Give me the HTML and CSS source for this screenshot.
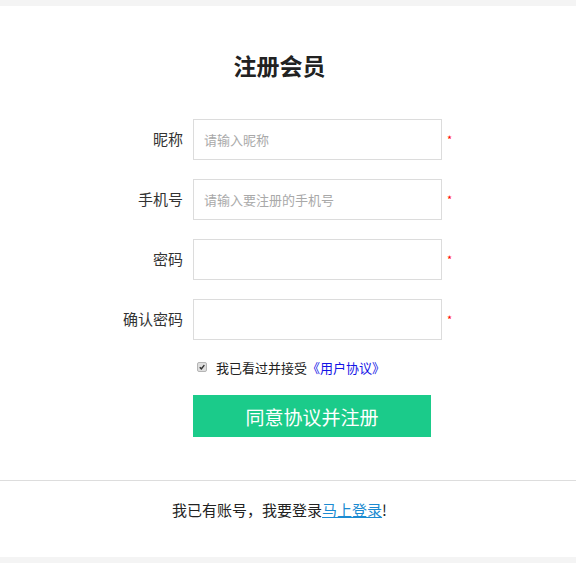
FILE: index.html
```html
<!DOCTYPE html>
<html lang="zh-CN">
<head>
<meta charset="utf-8">
<title>注册会员</title>
<link rel="stylesheet" href="styles.css">
</head>
<body>
<div class="page">
  <div class="inner">
    <h1 class="title">注册会员</h1>
    <form class="form">
      <div class="row">
        <label class="label">昵称</label>
        <input class="field" type="text" placeholder="请输入昵称">
        <span class="req">*</span>
      </div>
      <div class="row">
        <label class="label">手机号</label>
        <input class="field" type="text" placeholder="请输入要注册的手机号">
        <span class="req">*</span>
      </div>
      <div class="row">
        <label class="label">密码</label>
        <input class="field" type="password">
        <span class="req">*</span>
      </div>
      <div class="row row-last">
        <label class="label">确认密码</label>
        <input class="field" type="password">
        <span class="req">*</span>
      </div>
      <div class="agree">
        <span class="check"><svg width="10" height="10" viewBox="0 0 10 10"><path d="M2.2 5.2 L4.2 7.3 L7.9 2.6" fill="none" stroke="#333" stroke-width="1.8"/></svg></span>
        <span class="agree-text">我已看过并接受<a class="proto" href="#">《用户协议》</a></span>
      </div>
      <button class="submit" type="button">同意协议并注册</button>
    </form>
  </div>
  <div class="divider"></div>
  <div class="inner">
    <p class="login">我已有账号，我要登录<a class="login-link" href="#">马上登录</a>!</p>
  </div>
</div>
</body>
</html>
```
FILE: styles.css
```css
html, body {
  margin: 0;
  padding: 0;
}
body {
  background: #f4f4f4;
  padding: 6px 0;
  font-family: "Noto Sans CJK SC", "Noto Sans", sans-serif;
  color: #333;
}
.page {
  background: #fff;
  height: 551px;
  box-sizing: border-box;
  display: flex;
  flex-direction: column;
}
.inner {
  width: 559px;
}
.title {
  margin: 44px 0 0;
  height: 30px;
  line-height: 30px;
  font-size: 23px;
  font-weight: bold;
  text-align: center;
  color: #222;
}
.form {
  margin: 39px 0 0;
  display: flex;
  flex-direction: column;
}
.row {
  display: flex;
  align-items: center;
  height: 41px;
  margin-bottom: 19px;
}
.row-last {
  margin-bottom: 0;
}
.label {
  width: 183px;
  margin-right: 10px;
  text-align: right;
  font-size: 15px;
  color: #333;
  margin-top: -2px;
}
.field {
  width: 249px;
  height: 41px;
  box-sizing: border-box;
  border: 1px solid #dcdcdc;
  padding: 0 10px;
  font-size: 13px;
  font-family: "Noto Sans CJK SC", sans-serif;
  outline: none;
  margin: 0;
}
.field::placeholder {
  color: #a9a9a9;
}
.req {
  margin-left: 5px;
  color: #f00;
  font-size: 11px;
  line-height: 12px;
  margin-top: -2px;
}
.agree {
  display: flex;
  align-items: center;
  height: 20px;
  margin-top: 17px;
  padding-left: 197px;
}
.check {
  display: flex;
  width: 10px;
  height: 10px;
  box-sizing: border-box;
  border: 1px solid #b5b5b5;
  background: #dedede;
  border-radius: 2px;
  margin-right: 9px;
  align-items: center;
  justify-content: center;
}
.check svg {
  display: block;
}
.agree-text {
  font-size: 13px;
  color: #222;
}
.proto {
  color: #1414e6;
  text-decoration: none;
}
.submit {
  margin: 18px 0 0 193px;
  width: 238px;
  height: 42px;
  border: none;
  background: #1bcb8a;
  color: #fff;
  font-size: 19px;
  font-family: "Noto Sans CJK SC", sans-serif;
  padding: 0;
  cursor: pointer;
}
.divider {
  margin-top: 43px;
  height: 1px;
  background: #dddddd;
}
.login {
  margin: 19px 0 0;
  height: 20px;
  line-height: 20px;
  text-align: center;
  font-size: 15px;
  color: #222;
}
.login-link {
  color: #1a8ad1;
  text-decoration: underline;
}
```
